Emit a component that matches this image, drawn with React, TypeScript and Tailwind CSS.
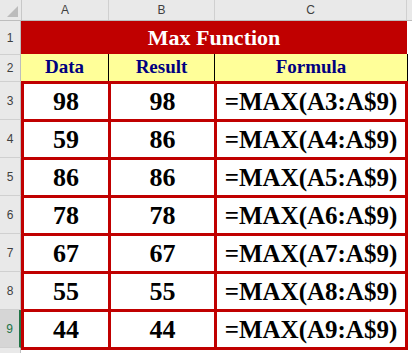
import React from "react";

const rows = [
  { n: 3, a: "98", b: "98", f: "=MAX(A3:A$9)" },
  { n: 4, a: "59", b: "86", f: "=MAX(A4:A$9)" },
  { n: 5, a: "86", b: "86", f: "=MAX(A5:A$9)" },
  { n: 6, a: "78", b: "78", f: "=MAX(A6:A$9)" },
  { n: 7, a: "67", b: "67", f: "=MAX(A7:A$9)" },
  { n: 8, a: "55", b: "55", f: "=MAX(A8:A$9)" },
  { n: 9, a: "44", b: "44", f: "=MAX(A9:A$9)" },
];

const serif = { fontFamily: '"Liberation Serif", "Times New Roman", serif' };
const sans = { fontFamily: '"Liberation Sans", Arial, sans-serif' };

function RowHead({ n, h, sel }: { n: number; h: string; sel?: boolean }) {
  return (
    <div
      className={`${h} flex items-center justify-center border-b border-[#d0d0d0] text-[12px] ${
        sel
          ? "bg-[#d6d6d6] text-[#217346] border-r-2 border-r-[#217346]"
          : "bg-[#e9e9e9] text-[#3f3f3f] border-r border-r-[#bdbdbd]"
      }`}
      style={sans}
    >
      {n}
    </div>
  );
}

export default function App() {
  return (
    <div className="w-[412px] h-[353px] bg-white overflow-hidden relative">
      {/* column header */}
      <div className="flex h-[21px] bg-[#e9e9e9] border-b border-[#bdbdbd] text-[12px] text-[#3f3f3f]" style={sans}>
        <div className="w-[22px] shrink-0 border-r border-[#c8c8c8] relative">
          <svg width="22" height="21" className="absolute left-0 top-0">
            <polygon points="7,17 18,17 18,6" fill="#bcbcbc" />
          </svg>
        </div>
        <div className="w-[87px] shrink-0 border-r border-[#d0d0d0] flex items-center justify-center">A</div>
        <div className="w-[106px] shrink-0 border-r border-[#d0d0d0] flex items-center justify-center">B</div>
        <div className="w-[192px] shrink-0 border-r border-[#d0d0d0] flex items-center justify-center">C</div>
        <div className="flex-1" />
      </div>

      <div className="flex">
        {/* row headers */}
        <div className="w-[21px] shrink-0 flex flex-col">
          <RowHead n={1} h="h-[34px]" />
          <RowHead n={2} h="h-[27px]" />
          {rows.map((r) => (
            <RowHead key={r.n} n={r.n} h="h-[38px]" sel={r.n === 9} />
          ))}
          <div className="h-[10px] bg-[#e9e9e9] border-r border-[#bdbdbd]" />
        </div>

        {/* sheet content */}
        <div className="flex flex-col">
          <div
            className="h-[33px] w-[386px] bg-[#c00000] text-white font-bold text-[22px] flex items-center justify-center"
            style={serif}
          >
            Max Function
          </div>
          <div className="h-[27px] w-[387px] flex bg-[#ffff99] text-[#000080] font-bold text-[19px]" style={serif}>
            <div className="w-[88px] border-r border-black flex items-center justify-center">Data</div>
            <div className="w-[106px] border-r border-black flex items-center justify-center">Result</div>
            <div className="w-[193px] border-r border-black flex items-center justify-center">Formula</div>
          </div>
          <div className="w-[387px] bg-[#c00000] p-[3px] flex flex-col gap-[3px]">
            {rows.map((r) => (
              <div key={r.n} className="flex gap-[3px] h-[35px] text-black font-bold" style={serif}>
                <div className="w-[84px] bg-white flex items-center justify-center text-[26px]">{r.a}</div>
                <div className="w-[103px] bg-white flex items-center justify-center text-[26px]">{r.b}</div>
                <div className="w-[188px] bg-white flex items-center justify-center text-[25px]">{r.f}</div>
              </div>
            ))}
          </div>
        </div>
      </div>
    </div>
  );
}
